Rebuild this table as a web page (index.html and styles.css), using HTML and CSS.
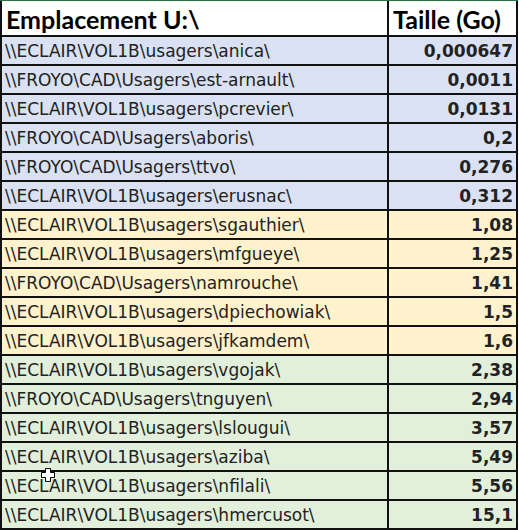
FILE: index.html
```html
<!DOCTYPE html>
<html lang="fr">
<head>
<meta charset="utf-8">
<title>Emplacement U:</title>
<link rel="stylesheet" href="styles.css">
</head>
<body>
<div class="sheet">
  <div class="row head">
    <div class="cell">Emplacement U:\</div>
    <div class="cell">Taille (Go)</div>
  </div>
  <div class="row blue"><div class="cell">\\ECLAIR\VOL1B\usagers\anica\</div><div class="cell num">0,000647</div></div>
  <div class="row blue"><div class="cell">\\FROYO\CAD\Usagers\est-arnault\</div><div class="cell num">0,0011</div></div>
  <div class="row blue"><div class="cell">\\ECLAIR\VOL1B\usagers\pcrevier\</div><div class="cell num">0,0131</div></div>
  <div class="row blue"><div class="cell">\\FROYO\CAD\Usagers\aboris\</div><div class="cell num">0,2</div></div>
  <div class="row blue"><div class="cell">\\FROYO\CAD\Usagers\ttvo\</div><div class="cell num">0,276</div></div>
  <div class="row blue"><div class="cell">\\ECLAIR\VOL1B\usagers\erusnac\</div><div class="cell num">0,312</div></div>
  <div class="row yellow"><div class="cell">\\ECLAIR\VOL1B\usagers\sgauthier\</div><div class="cell num">1,08</div></div>
  <div class="row yellow"><div class="cell">\\ECLAIR\VOL1B\usagers\mfgueye\</div><div class="cell num">1,25</div></div>
  <div class="row yellow"><div class="cell">\\FROYO\CAD\Usagers\namrouche\</div><div class="cell num">1,41</div></div>
  <div class="row yellow"><div class="cell">\\ECLAIR\VOL1B\usagers\dpiechowiak\</div><div class="cell num">1,5</div></div>
  <div class="row yellow"><div class="cell">\\ECLAIR\VOL1B\usagers\jfkamdem\</div><div class="cell num">1,6</div></div>
  <div class="row green"><div class="cell">\\ECLAIR\VOL1B\usagers\vgojak\</div><div class="cell num">2,38</div></div>
  <div class="row green"><div class="cell">\\FROYO\CAD\Usagers\tnguyen\</div><div class="cell num">2,94</div></div>
  <div class="row green"><div class="cell">\\ECLAIR\VOL1B\usagers\lslougui\</div><div class="cell num">3,57</div></div>
  <div class="row green"><div class="cell">\\ECLAIR\VOL1B\usagers\aziba\</div><div class="cell num">5,49</div></div>
  <div class="row green"><div class="cell">\\ECLAIR\VOL1B\usagers\nfilali\</div><div class="cell num">5,56</div></div>
  <div class="row green"><div class="cell">\\ECLAIR\VOL1B\usagers\hmercusot\</div><div class="cell num">15,1</div></div>
  <svg class="cursor" width="14" height="14" viewBox="0 0 14 14" aria-hidden="true">
    <path d="M4.5 0.5h5v4h4v5h-4v4h-5v-4h-4v-5h4z" fill="#fff" stroke="#000" stroke-width="1"/>
  </svg>
</div>
</body>
</html>
```
FILE: styles.css
```css
html, body {
  margin: 0;
  padding: 0;
  background: #fff;
}

.sheet {
  position: relative;
  width: 518px;
  border-top: 1px solid #217346;
}

.row {
  display: grid;
  grid-template-columns: 385px 127px;
  column-gap: 2px;
  padding: 0 2px;
  background: #111;
  border-bottom: 2px solid #111;
  height: 29px;
  box-sizing: border-box;
}

.row.head {
  height: 36px;
}

.cell {
  display: flex;
  align-items: center;
  padding: 0 3px;
  white-space: nowrap;
  overflow: hidden;
  font-family: "DejaVu Sans", Verdana, sans-serif;
  font-size: 17px;
  color: #222;
}

.head .cell {
  background: #fff;
  font-family: Lato, "Liberation Sans", sans-serif;
  font-weight: 700;
  font-size: 25px;
  color: #000;
  padding: 2px 4px 0;
}

.blue .cell { background: #d9e1f2; }
.yellow .cell { background: #fff2cc; }
.green .cell { background: #e2efda; }

.num {
  justify-content: flex-end;
  font-weight: 700;
}

.cursor {
  position: absolute;
  left: 41px;
  top: 467px;
}
```
